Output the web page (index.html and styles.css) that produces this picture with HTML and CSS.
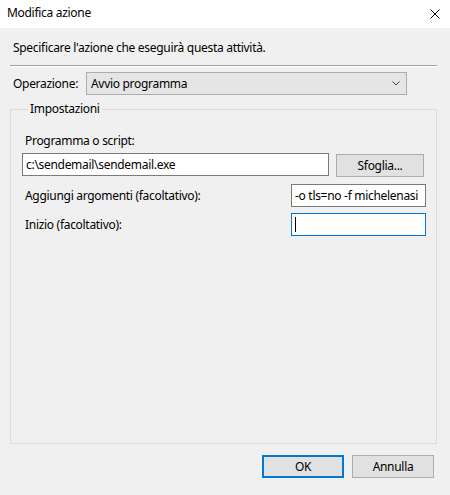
FILE: index.html
```html
<!DOCTYPE html>
<html lang="it">
<head>
<meta charset="utf-8">
<title>Modifica azione</title>
<link rel="stylesheet" href="styles.css">
</head>
<body>
<div class="window">
  <div class="titlebar">
    <span class="title">Modifica azione</span>
    <svg class="close" width="10" height="10" viewBox="0 0 10 10"><path d="M0.5 0.5 L9.5 9.5 M9.5 0.5 L0.5 9.5" stroke="#000" stroke-width="1" fill="none"/></svg>
  </div>
  <div class="body">
    <p class="desc">Specificare l'azione che eseguirà questa attività.</p>
    <div class="sep"></div>
    <div class="oprow">
      <span class="oplabel">Operazione:</span>
      <div class="combo">
        <span>Avvio programma</span>
        <svg width="8" height="5" viewBox="0 0 8 5"><path d="M0.5 0.5 L4 4 L7.5 0.5" stroke="#444" stroke-width="1" fill="none"/></svg>
      </div>
    </div>
    <fieldset class="group">
      <legend>Impostazioni</legend>
      <div class="lbl first">Programma o script:</div>
      <div class="progrow">
        <div class="input wide">c:\sendemail\sendemail.exe</div>
        <div class="btn browse">Sfoglia...</div>
      </div>
      <div class="argrow">
        <span class="lbl">Aggiungi argomenti (facoltativo):</span>
        <div class="input narrow clip">-o tls=no -f michelenasi</div>
      </div>
      <div class="argrow second">
        <span class="lbl">Inizio (facoltativo):</span>
        <div class="input narrow focus"><span class="caret"></span></div>
      </div>
    </fieldset>
    <div class="buttons">
      <div class="btn ok">OK</div>
      <div class="btn">Annulla</div>
    </div>
  </div>
</div>
</body>
</html>
```

FILE: styles.css
```css
* { box-sizing: border-box; }
html, body { margin: 0; padding: 0; }
body {
  width: 450px;
  height: 495px;
  background: #f0f0f0;
  font-family: "Noto Sans", "Open Sans", sans-serif;
  font-size: 12px;
  letter-spacing: -0.3px;
  color: #000;
  overflow: hidden;
}
.window { width: 450px; height: 495px; }
.titlebar {
  height: 28px;
  background: #fff;
  display: flex;
  align-items: center;
  justify-content: space-between;
  padding: 0 10px 2px 7px;
}
.title { line-height: 16px; }
.close { display: block; margin-top: 1px; }
.body { padding: 0 13px 0 10px; }
.desc {
  margin: 0;
  padding: 12px 0 0 3px;
  line-height: 16px;
  height: 37px;
}
.sep {
  height: 2px;
  border-top: 1px solid #a0a0a0;
  border-bottom: 1px solid #fff;
}
.oprow {
  display: flex;
  align-items: center;
  margin-top: 5px;
  height: 23px;
}
.oplabel { width: 76px; padding-left: 3px; }
.combo {
  width: 321px;
  height: 23px;
  background: #e5e5e5;
  border: 1px solid #adadad;
  display: flex;
  align-items: center;
  justify-content: space-between;
  padding: 0 6px 0 4px;
}
.combo svg { display: block; }
.group {
  margin: 6px 0 0 0;
  padding: 16px 11px 0 11px;
  border: 1px solid #dcdcdc;
  height: 343px;
  min-width: 0;
}
.group legend {
  padding: 0 2px;
  margin-left: 6px;
  line-height: 16px;
}
.lbl { line-height: 16px; padding-left: 3px; }
.first { margin-bottom: 4px; }
.progrow { display: flex; align-items: flex-start; gap: 7px; }
.input {
  height: 23px;
  background: #fff;
  border: 1px solid #7a7a7a;
  padding: 0 3px;
  line-height: 21px;
  white-space: nowrap;
}
.wide { width: 307px; }
.narrow { width: 135px; }
.clip { overflow: hidden; }
.focus { border-color: #0078d7; display: flex; align-items: center; }
.caret { display: block; width: 1px; height: 15px; background: #000; }
.btn {
  height: 23px;
  background: #e1e1e1;
  border: 1px solid #adadad;
  display: flex;
  align-items: center;
  justify-content: center;
}
.browse { width: 88px; margin-top: 1px; }
.argrow {
  display: flex;
  justify-content: space-between;
  align-items: center;
  margin-top: 7px;
  margin-right: -1px;
}
.argrow.second { margin-top: 6px; }
.buttons {
  display: flex;
  justify-content: flex-end;
  gap: 8px;
  margin-top: 11px;
  padding-right: 3px;
}
.buttons .btn { width: 82px; }
.ok { border: 2px solid #0078d7; }
```
